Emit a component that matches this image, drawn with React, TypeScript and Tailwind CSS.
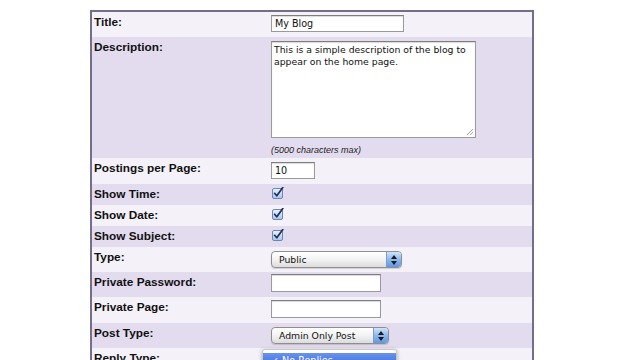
import React from "react";

const LIGHT = "bg-[#f4f1f9]";
const LAV = "bg-[#e3dbee]";

function Row({
  label,
  h,
  bg,
  pt,
  children,
}: {
  label: string;
  h: string;
  bg: string;
  pt: string;
  children?: React.ReactNode;
}) {
  return (
    <div className={`flex ${h} ${bg}`}>
      <div className="w-[176px] pl-[2px] pt-[3px] text-[11.8px] leading-[14px] font-bold text-[#111]">
        {label}
      </div>
      <div className={`flex-1 pl-[3px] ${pt}`}>{children}</div>
    </div>
  );
}

function TextBox({ w, h, value }: { w: string; h: string; value?: string }) {
  return (
    <div
      className={`${w} ${h} bg-white border border-[#9a9a9a] border-t-[#7e7e7e] shadow-[inset_0_1px_1px_rgba(0,0,0,0.15)] px-[3px] text-[9.6px] leading-[15px] text-[#111] font-['DejaVu_Sans',sans-serif]`}
    >
      {value}
    </div>
  );
}

function Check() {
  return (
    <svg width="12" height="12" viewBox="0 0 12 12" className="ml-[1px]">
      <defs>
        <linearGradient id="cb" x1="0" y1="0" x2="0" y2="1">
          <stop offset="0" stopColor="#eaf2ff" />
          <stop offset="1" stopColor="#a9c6ec" />
        </linearGradient>
      </defs>
      <rect x="0.5" y="1.5" width="10" height="10" rx="1.5" fill="url(#cb)" stroke="#6f86b3" />
      <path d="M2.6 6.3 L4.8 8.8 L10.8 0.6" fill="none" stroke="#1d2f5c" strokeWidth="1.7" strokeLinecap="round" strokeLinejoin="round" />
    </svg>
  );
}

function Select({ w, value }: { w: string; value: string }) {
  return (
    <div
      className={`${w} h-[17px] flex rounded-[4px] border border-[#8f8f8f] overflow-hidden bg-gradient-to-b from-white via-[#f3f3f3] to-[#dcdcdc] shadow-[0_1px_1px_rgba(0,0,0,0.15)]`}
    >
      <div className="flex-1 pl-[7px] text-[9.3px] leading-[15px] text-[#111] font-['DejaVu_Sans',sans-serif]">
        {value}
      </div>
      <div className="w-[15px] flex flex-col items-center justify-center gap-[2px] bg-gradient-to-b from-[#cfe3fb] via-[#8cb8ee] to-[#5f99e2] border-l border-[#7b9ccc] rounded-r-[3px]">
        <svg width="6" height="4" viewBox="0 0 6 4">
          <path d="M0 4 L3 0 L6 4 Z" fill="#1a1a1a" />
        </svg>
        <svg width="6" height="4" viewBox="0 0 6 4">
          <path d="M0 0 L3 4 L6 0 Z" fill="#1a1a1a" />
        </svg>
      </div>
    </div>
  );
}

export default function App() {
  return (
    <div className="w-[640px] h-[360px] overflow-hidden bg-white relative font-['Liberation_Sans',Arial,sans-serif]">
      <div className="ml-[90px] mt-[10px] w-[444px] border-2 border-[#736d8e]">
        <Row label="Title:" h="h-[25px]" bg={LIGHT} pt="pt-[3px]">
          <TextBox w="w-[133px]" h="h-[17px]" value="My Blog" />
        </Row>
        <Row label="Description:" h="h-[121px]" bg={LAV} pt="pt-[4px]">
          <div className="relative w-[205px] h-[97px] bg-white border border-[#9a9a9a] border-t-[#7e7e7e] shadow-[inset_0_1px_1px_rgba(0,0,0,0.15)] px-[2px] pt-[2px] text-[9.3px] leading-[12px] text-[#111] font-['DejaVu_Sans',sans-serif]">
            This is a simple description of the blog to appear on the home page.
            <svg width="8" height="8" viewBox="0 0 8 8" className="absolute right-[1px] bottom-[1px]">
              <path d="M7 1 L1 7 M7 4 L4 7" stroke="#8a8a8a" strokeWidth="0.8" />
            </svg>
          </div>
          <div className="mt-[6px] text-[9px] italic leading-[12px] text-[#222]">
            (5000 characters max)
          </div>
        </Row>
        <Row label="Postings per Page:" h="h-[26px]" bg={LIGHT} pt="pt-[4px]">
          <TextBox w="w-[44px]" h="h-[17px]" value="10" />
        </Row>
        <Row label="Show Time:" h="h-[21px]" bg={LAV} pt="pt-[3px]">
          <Check />
        </Row>
        <Row label="Show Date:" h="h-[21px]" bg={LIGHT} pt="pt-[3px]">
          <Check />
        </Row>
        <Row label="Show Subject:" h="h-[21px]" bg={LAV} pt="pt-[3px]">
          <Check />
        </Row>
        <Row label="Type:" h="h-[25px]" bg={LIGHT} pt="pt-[4px]">
          <Select w="w-[131px]" value="Public" />
        </Row>
        <Row label="Private Password:" h="h-[25px]" bg={LAV} pt="pt-[2px]">
          <TextBox w="w-[110px]" h="h-[18px]" />
        </Row>
        <Row label="Private Page:" h="h-[26px]" bg={LIGHT} pt="pt-[3px]">
          <TextBox w="w-[110px]" h="h-[18px]" />
        </Row>
        <Row label="Post Type:" h="h-[25px]" bg={LAV} pt="pt-[4px]">
          <Select w="w-[118px]" value="Admin Only Post" />
        </Row>
        <Row label="Reply Type:" h="h-[30px]" bg={LIGHT} pt="pt-[5px]" />
      </div>
      <div className="absolute left-[262px] top-[349px] w-[135px] h-[20px] bg-white border border-[#c8c8c8] rounded-t-[3px] shadow-[0_1px_4px_rgba(0,0,0,0.3)] pt-[3px]">
        <div className="h-[16px] bg-gradient-to-b from-[#6a93ec] to-[#2f62d8] text-white text-[9.6px] leading-[15px] pl-[8px] font-['DejaVu_Sans',sans-serif]">
          ✓ No Replies
        </div>
      </div>
    </div>
  );
}
